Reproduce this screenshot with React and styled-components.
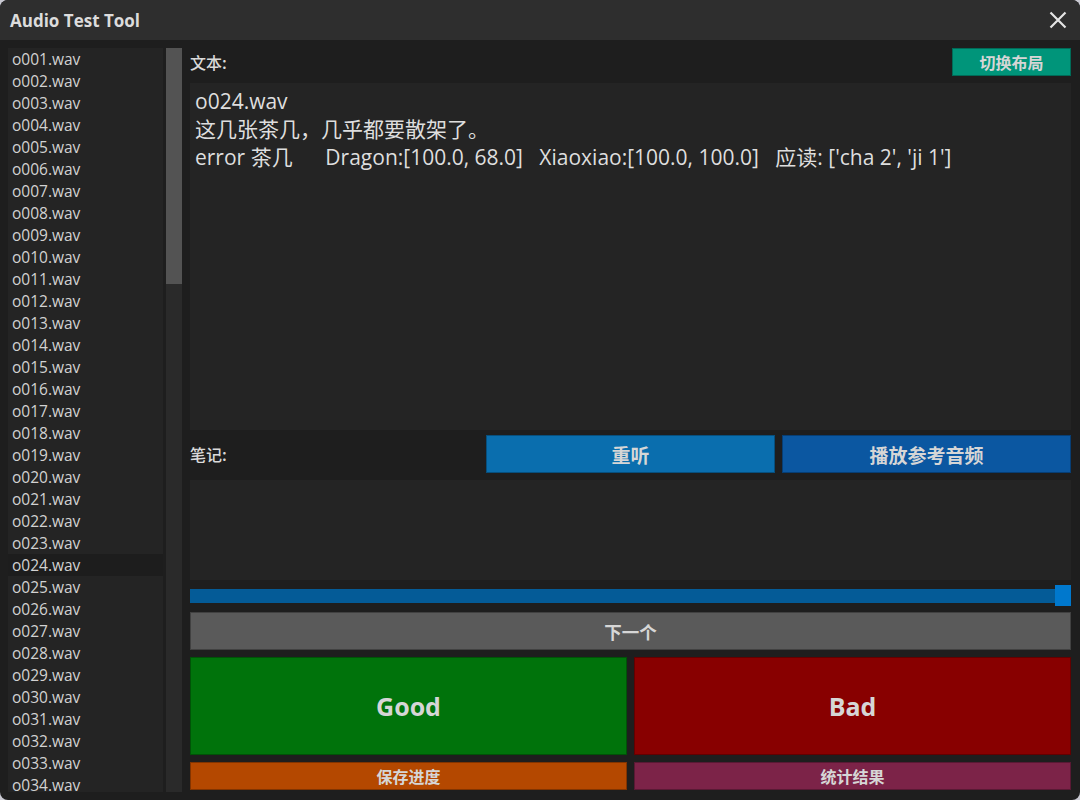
import React from "react";
import styled, { createGlobalStyle } from "styled-components";

const Global = createGlobalStyle`
  html, body { margin: 0; padding: 0; background: #c9c9d2; }
  body { font-family: "Noto Sans", "Noto Sans CJK SC", sans-serif; }
  * { box-sizing: border-box; }
`;

const Window = styled.div`
  width: 1080px;
  height: 800px;
  background: #1e1e1e;
  border-radius: 8px;
  overflow: hidden;
  display: flex;
  flex-direction: column;
`;

const TitleBar = styled.div`
  height: 40px;
  flex: none;
  background: #2e2e2e;
  display: flex;
  align-items: center;
  justify-content: space-between;
  padding: 0 11px 0 10px;
`;

const Title = styled.div`
  color: #dcdcdc;
  font-family: "Open Sans", "Noto Sans CJK SC", sans-serif;
  font-weight: 700;
  font-size: 17px;
`;

const Close = styled.div`
  width: 22px;
  height: 22px;
  display: flex;
  align-items: center;
  justify-content: center;
`;

const Body = styled.div`
  flex: 1;
  min-height: 0;
  display: flex;
  padding: 8px 9px 0 8px;
`;

const ListBox = styled.div`
  width: 155px;
  height: 744px;
  background: #242424;
  overflow: hidden;
  flex: none;
`;

const ListItem = styled.div`
  height: 22px;
  line-height: 22px;
  padding-left: 4px;
  font-size: 15.5px;
  color: #d2d2d2;
  white-space: nowrap;
  background: ${(p) => (p.$selected ? "#1d1d1d" : "transparent")};
  font-family: "Open Sans", "Noto Sans CJK SC", sans-serif;
`;

const Track = styled.div`
  width: 16px;
  height: 744px;
  margin-left: 3px;
  background: #2a2a2a;
  flex: none;
`;

const Thumb = styled.div`
  height: 236px;
  background: #535353;
`;

const Right = styled.div`
  flex: 1;
  margin-left: 8px;
  display: flex;
  flex-direction: column;
`;

const HeaderRow = styled.div`
  height: 28px;
  display: flex;
  align-items: center;
  justify-content: space-between;
`;

const Label = styled.div`
  color: #dadada;
  font-size: 16px;
  font-weight: 500;
  font-family: "Noto Sans CJK SC", sans-serif;
`;

const Button = styled.button`
  border: 1px solid rgba(0, 0, 0, 0.28);
  background: ${(p) => p.$bg};
  color: #d6d6d6;
  font-weight: 700;
  font-size: ${(p) => p.$size || 16}px;
  height: ${(p) => p.$h || 38}px;
  width: ${(p) => (p.$w ? p.$w + "px" : "100%")};
  padding: 0;
  display: flex;
  align-items: center;
  justify-content: center;
  cursor: pointer;
  font-family: ${(p) =>
    p.$latin ? '"Open Sans", "Noto Sans CJK SC", sans-serif' : '"Noto Sans CJK SC", sans-serif'};
`;

const TextPanel = styled.div`
  margin-top: 7px;
  height: 347px;
  background: #242424;
  padding: 4px 5px;
  color: #dedede;
  font-size: 21px;
  line-height: 28px;
  font-family: "Open Sans", "Noto Sans CJK SC", sans-serif;
  white-space: pre;
`;

const ActionRow = styled.div`
  margin-top: 5px;
  display: grid;
  grid-template-columns: 1fr 1fr 1fr;
  column-gap: 7px;
  align-items: center;
`;

const NotePanel = styled.div`
  margin-top: 7px;
  height: 100px;
  background: #242424;
`;

const SliderWrap = styled.div`
  margin-top: 5px;
  height: 21px;
  position: relative;
  display: flex;
  align-items: center;
`;

const SliderBar = styled.div`
  height: 14px;
  width: 100%;
  background: #045b97;
`;

const SliderHandle = styled.div`
  position: absolute;
  right: 0;
  top: 0;
  width: 16px;
  height: 21px;
  background: #0078cd;
`;

const Stack = styled.div`
  margin-top: 6px;
  display: flex;
  flex-direction: column;
  gap: 7px;
`;

const Pair = styled.div`
  display: grid;
  grid-template-columns: 1fr 1fr;
  column-gap: 7px;
`;

const files = Array.from({ length: 34 }, (_, i) => `o${String(i + 1).padStart(3, "0")}.wav`);

const content =
  "o024.wav\n这几张茶几，几乎都要散架了。\nerror 茶几      Dragon:[100.0, 68.0]   Xiaoxiao:[100.0, 100.0]   应读: ['cha 2', 'ji 1']";

export default function App() {
  return (
    <>
      <Global />
      <Window>
        <TitleBar>
          <Title>Audio Test Tool</Title>
          <Close>
            <svg width="18" height="18" viewBox="0 0 18 18">
              <path d="M1.5 1.5 L16.5 16.5 M16.5 1.5 L1.5 16.5" stroke="#e4e4e4" strokeWidth="2.2" />
            </svg>
          </Close>
        </TitleBar>
        <Body>
          <ListBox>
            {files.map((f) => (
              <ListItem key={f} $selected={f === "o024.wav"}>
                {f}
              </ListItem>
            ))}
          </ListBox>
          <Track>
            <Thumb />
          </Track>
          <Right>
            <HeaderRow>
              <Label>文本:</Label>
              <Button $bg="#00957a" $w={119} $h={28} $size={16}>
                切换布局
              </Button>
            </HeaderRow>
            <TextPanel>{content}</TextPanel>
            <ActionRow>
              <Label>笔记:</Label>
              <Button $bg="#0a6eae" $size={19}>重听</Button>
              <Button $bg="#0b57a1" $size={19}>播放参考音频</Button>
            </ActionRow>
            <NotePanel />
            <SliderWrap>
              <SliderBar />
              <SliderHandle />
            </SliderWrap>
            <Stack>
              <Button $bg="#5a5a5a" $size={17.5}>下一个</Button>
              <Pair>
                <Button $bg="#00730b" $h={98} $size={25} $latin>Good</Button>
                <Button $bg="#880000" $h={98} $size={25} $latin>Bad</Button>
              </Pair>
              <Pair>
                <Button $bg="#b44800" $h={28} $size={16}>保存进度</Button>
                <Button $bg="#7c2348" $h={28} $size={16}>统计结果</Button>
              </Pair>
            </Stack>
          </Right>
        </Body>
      </Window>
    </>
  );
}
